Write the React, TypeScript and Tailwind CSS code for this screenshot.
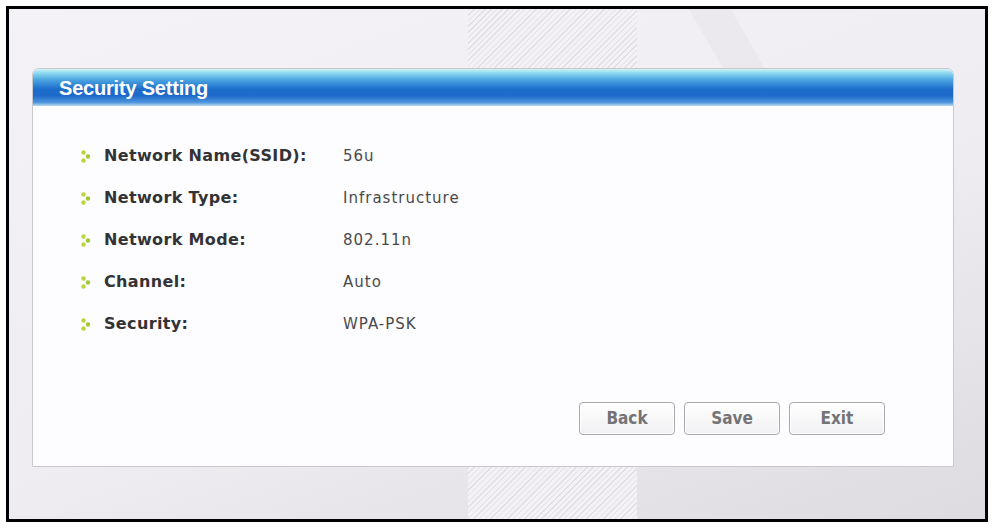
import React from "react";

// Wireless wizard: security summary step.

const rows: { label: string; value: string }[] = [
  { label: "Network Name(SSID):", value: "56u" },
  { label: "Network Type:", value: "Infrastructure" },
  { label: "Network Mode:", value: "802.11n" },
  { label: "Channel:", value: "Auto" },
  { label: "Security:", value: "WPA-PSK" },
];

function Bullet() {
  return (
    <svg width="10" height="13" viewBox="0 0 10 13" aria-hidden className="shrink-0">
      <circle cx="2.5" cy="2.5" r="2.2" fill="#b9d63e" />
      <circle cx="7" cy="6.5" r="2.2" fill="#a2c734" />
      <circle cx="2.5" cy="10.5" r="2.2" fill="#b9d63e" />
    </svg>
  );
}

function WizardButton({ children }: { children: React.ReactNode }) {
  return (
    <button
      type="button"
      className="flex h-[33px] w-[96px] items-center justify-center rounded-[4px] border border-[#a9a9ab] bg-[linear-gradient(#ffffff,#f1f0f2)] text-[17px] font-semibold text-[#747476] shadow-[inset_0_0_0_1px_#ffffff] [font-family:'DejaVu_Sans_Condensed','DejaVu_Sans',sans-serif]"
    >
      {children}
    </button>
  );
}

export default function App() {
  return (
    <div className="h-[529px] w-[993px] bg-white p-[6px]">
      <div className="relative h-[516px] w-[982px] overflow-hidden border-[3px] border-black bg-[linear-gradient(160deg,#f4f2f6_0%,#efedf1_55%,#dddbe0_100%)]">
        {/* background decoration */}
        <div className="pointer-events-none absolute left-[459px] top-0 h-full w-[169px] bg-[repeating-linear-gradient(135deg,#e2e0e5_0px,#e2e0e5_1px,#f3f1f5_1px,#f3f1f5_4px)]" />
        <div className="pointer-events-none absolute left-[700px] top-[-30px] h-[120px] w-[36px] rotate-[-30deg] bg-[#e7e5e9]/60" />

        <div className="relative ml-[23px] mt-[59px] flex h-[399px] w-[922px] flex-col rounded-t-[7px] border border-[#c9c8cc] bg-[#fdfcfe]">
          <div className="flex h-[37px] items-center rounded-t-[6px] bg-[linear-gradient(#d4f2f8_0%,#8fdcf0_10%,#4aa2e0_30%,#1c6cca_55%,#1e6acb_72%,#4d94dc_90%,#b9dcf0_100%)] pl-[26px]">
            <span className="text-[20px] font-bold tracking-[-0.2px] text-white [font-family:'Liberation_Sans',Arial,sans-serif]">
              Security Setting
            </span>
          </div>

          <div className="flex flex-col pl-[48px] pt-[29px]">
            {rows.map((r) => (
              <div key={r.label} className="flex h-[42px] items-center">
                <Bullet />
                <span className="ml-[13px] w-[239px] text-[16px] font-bold tracking-[0.35px] text-[#333335] [font-family:'DejaVu_Sans',sans-serif]">
                  {r.label}
                </span>
                <span className="text-[15px] tracking-[1px] text-[#4a4a4c] [font-family:'DejaVu_Sans',sans-serif]">
                  {r.value}
                </span>
              </div>
            ))}
          </div>

          <div className="mb-[31px] mr-[68px] mt-auto flex justify-end gap-[9px]">
            <WizardButton>Back</WizardButton>
            <WizardButton>Save</WizardButton>
            <WizardButton>Exit</WizardButton>
          </div>
        </div>
      </div>
    </div>
  );
}
